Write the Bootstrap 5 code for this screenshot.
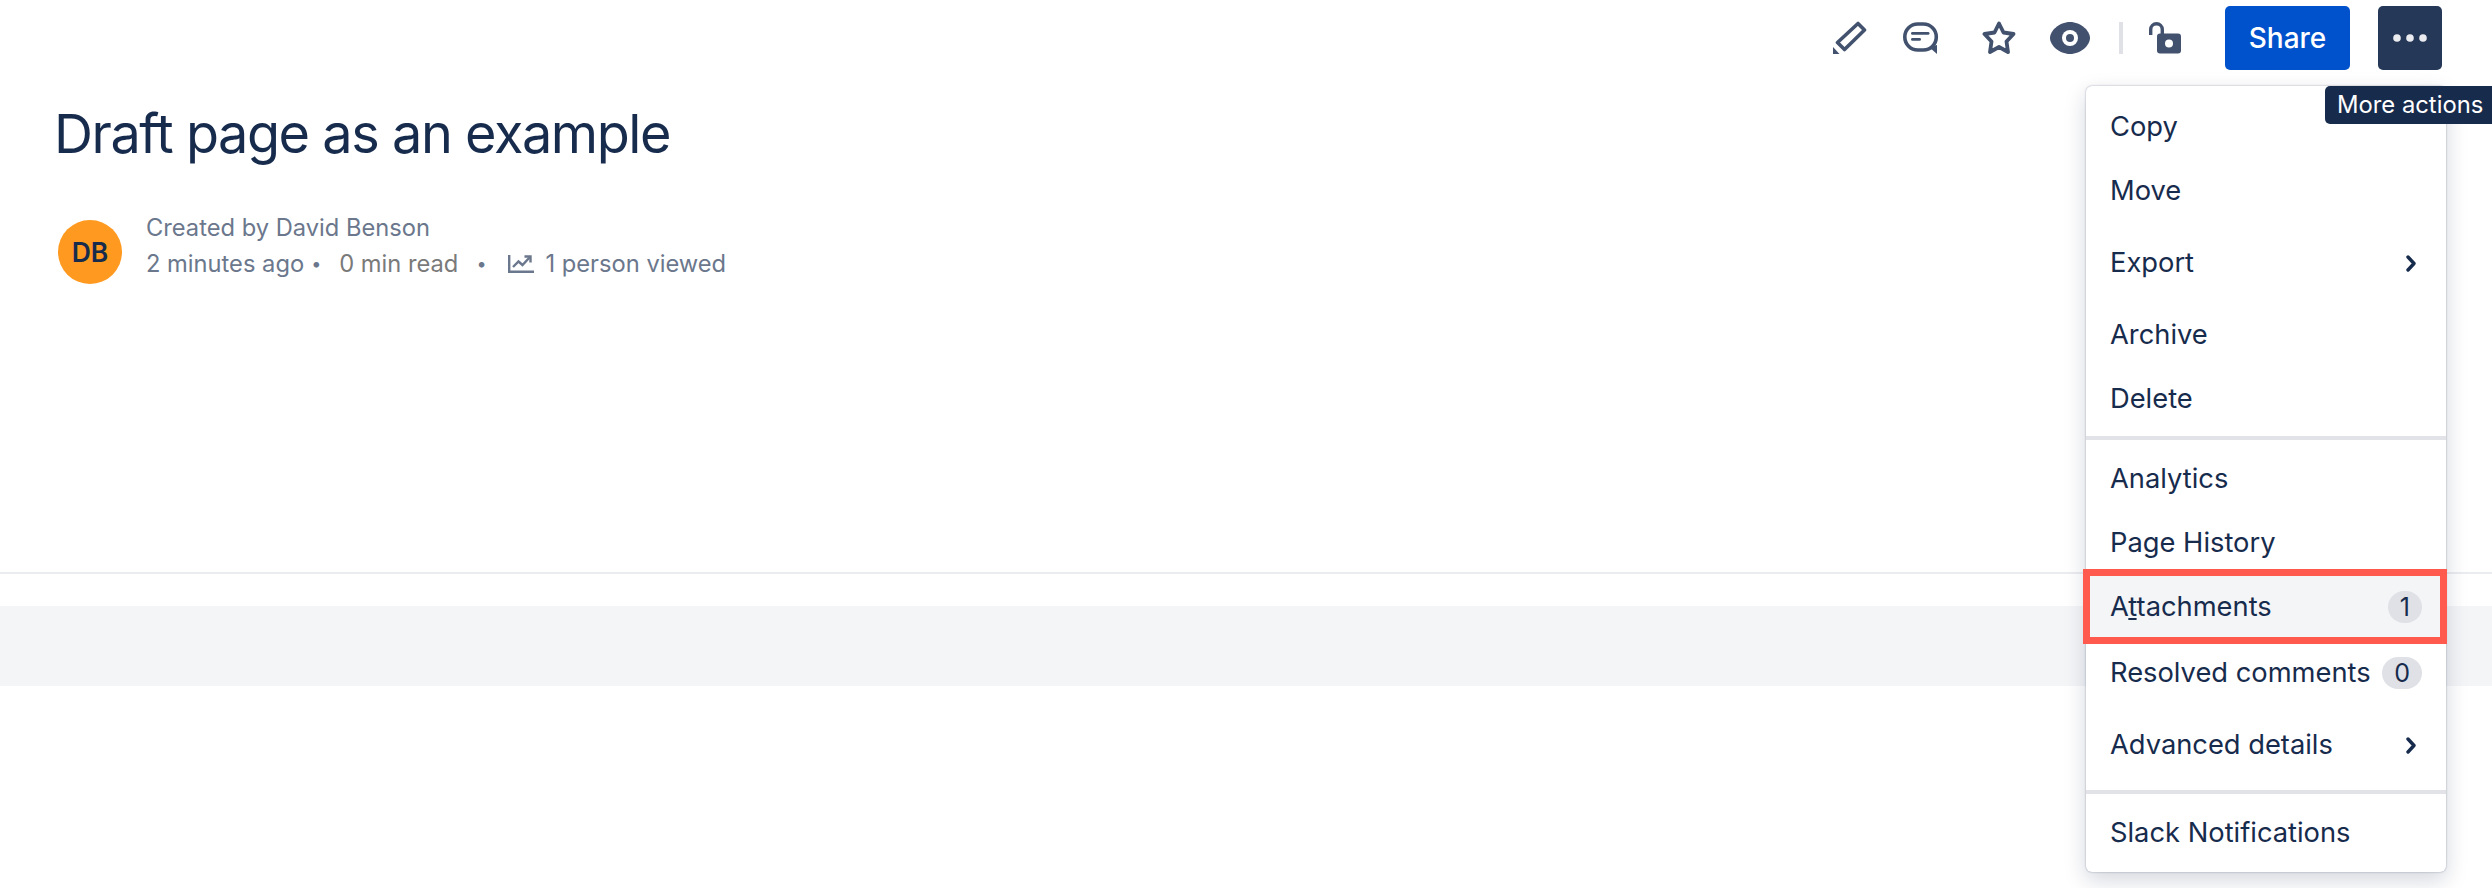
<!DOCTYPE html>
<html lang="en">

<head>
    <meta charset="UTF-8">
    <title>Draft page as an example</title>
    <link href="https://cdn.jsdelivr.net/npm/bootstrap@5.3.3/dist/css/bootstrap.min.css" rel="stylesheet">
    <style>
        body {
            font-family: Inter, "Liberation Sans", sans-serif;
            color: #172b4d;
            background-color: #fff;
            overflow: hidden;
        }

        .page-shell {
            position: relative;
            height: 888px;
        }

        .top-bar {
            height: 76px;
            padding: 6px 50px 0 0;
        }

        .bar-tools {
            height: 64px;
        }

        .bar-icon {
            display: block;
            color: #42526e;
        }

        .gap-comment {
            margin-left: 36px;
        }

        .gap-star {
            margin-left: 42px;
        }

        .gap-eye {
            margin-left: 33px;
        }

        .gap-rule {
            margin-left: 29px;
        }

        .gap-lock {
            margin-left: 26px;
        }

        .bar-rule {
            width: 4px;
            height: 32px;
            background-color: #dfe1e6;
        }

        .btn-share {
            width: 125px;
            height: 64px;
            margin-left: 44px;
            background-color: #0052cc;
            border: 0;
            border-radius: 5px;
            color: #fff;
            font-size: 28px;
            font-weight: 500;
        }

        .btn-more {
            width: 64px;
            height: 64px;
            margin-left: 28px;
            padding: 0;
            background-color: #253858;
            border: 0;
            border-radius: 5px;
        }

        .page-head {
            padding-left: 54px;
        }

        .page-title {
            margin: 24px 0 0;
            font-size: 54px;
            font-weight: 400;
            letter-spacing: -1.45px;
            line-height: 68px;
            color: #172b4d;
        }

        .byline {
            margin: 42px 0 0 4px;
            color: #6b778c;
            font-size: 23.7px;
            line-height: 36px;
        }

        .avatar {
            width: 64px;
            height: 64px;
            margin: 10px 24px 0 0;
            background-color: #ff991f;
            color: #172b4d;
            font-size: 26.5px;
            font-weight: 600;
        }

        .read-time {
            margin-left: 18px;
            color: #7a7a7a;
        }

        .meta-dot {
            margin-left: 18px;
            font-size: 18px;
        }

        .meta-dot.first-dot {
            margin-left: 7px;
        }

        .views-icon {
            margin-left: 21px;
        }

        .views-text {
            margin-left: 12px;
        }

        .page-rule {
            height: 2px;
            margin-top: 288px;
            background-color: #ebecf0;
        }

        .gray-band {
            height: 80px;
            margin-top: 32px;
            background-color: #f4f5f7;
        }

        .action-menu {
            position: absolute;
            top: 86px;
            left: 2086px;
            width: 360px;
            height: 786px;
            padding: 8px 0 0;
            margin: 0;
            background-color: #fff;
            border: 0;
            border-radius: 6px;
            box-shadow: 0 8px 22px rgba(9, 30, 66, .18), 0 0 2px rgba(9, 30, 66, .4);
        }

        .action-menu .dropdown-item {
            height: 64px;
            padding: 2px 24px 0;
            color: #172b4d;
            font-size: 27.3px;
        }

        .action-menu .dropdown-item.has-sub {
            height: 80px;
        }

        .action-menu .dropdown-divider {
            height: 4px;
            margin: 6px 0;
            border: 0;
            background-color: #e1e3e9;
            opacity: 1;
        }

        .action-menu .dropdown-item.picked {
            position: relative;
            margin-bottom: 2px;
            background-color: #f4f5f7;
        }

        .action-menu .dropdown-item.picked::after {
            content: "";
            position: absolute;
            top: -5px;
            right: -1px;
            bottom: -6px;
            left: -3px;
            border: 7px solid #ff5a4d;
        }

        .count-pill {
            height: 32px;
            line-height: 32px;
            padding: 0 12px;
            border-radius: 16px;
            background-color: #dfe1e6;
            text-align: center;
            font-size: 25px;
        }

        .sub-arrow {
            margin-right: 6px;
        }

        .more-tip {
            position: absolute;
            z-index: 1001;
            top: 86px;
            left: 2325px;
            width: 167px;
            height: 38px;
            padding-left: 12px;
            background-color: #172b4d;
            border-radius: 5px 0 0 5px;
            color: #fff;
            font-size: 23.8px;
            line-height: 38px;
            white-space: nowrap;
        }
    </style>
</head>

<body>
    <div class="page-shell">
        <div class="top-bar d-flex justify-content-end align-items-start">
            <div class="bar-tools d-flex align-items-center">
                <!-- pencil -->
                <svg class="bar-icon" width="34" height="34" viewBox="0 0 34 34" fill="none">
                    <path d="M4.500 21.500 25 2.500 31.500 9 11.500 28.500Z" stroke="currentColor" stroke-width="3.600" stroke-linejoin="round"/>
                    <path d="M0 26 6.500 33H0Z" fill="currentColor"/>
                </svg>
                <!-- comment -->
                <svg class="bar-icon gap-comment" width="36" height="34" viewBox="0 0 36 34" fill="none">
                    <rect x="1.800" y="3" width="31.500" height="26" rx="13" stroke="currentColor" stroke-width="3.600"/>
                    <path d="M26 26 34 33V24Z" fill="currentColor"/>
                    <rect x="8" y="11" width="18.500" height="2.800" rx="1.400" fill="currentColor"/>
                    <rect x="8" y="17" width="10" height="2.800" rx="1.400" fill="currentColor"/>
                </svg>
                <!-- star -->
                <svg class="bar-icon gap-star" width="36" height="34" viewBox="0 0 36 34" fill="none">
                    <path d="M18 2.500 22.500 11.500 32.500 13 25.500 20.500 27 31 18 26 9 31 10.500 20.500 3.500 13 13.500 11.500Z" stroke="currentColor" stroke-width="3.800" stroke-linejoin="round"/>
                </svg>
                <!-- eye -->
                <svg class="bar-icon gap-eye" width="40" height="32" viewBox="0 0 40 32">
                    <path d="M20 0C31 0 40 9 40 16S31 32 20 32 0 23 0 16 9 0 20 0Z" fill="currentColor"/>
                    <circle cx="20" cy="16" r="8" fill="#fff"/>
                    <circle cx="20" cy="16" r="4" fill="currentColor"/>
                </svg>
                <div class="bar-rule gap-rule"></div>
                <!-- open lock -->
                <svg class="bar-icon gap-lock" width="32" height="32" viewBox="0 0 32 32" fill="none">
                    <path d="M1.700 13V7.500a5.800 5.800 0 0 1 11.600 0V13" stroke="currentColor" stroke-width="3.400"/>
                    <rect x="8" y="11.500" width="24" height="20" rx="3" fill="currentColor"/>
                    <circle cx="20" cy="21.500" r="4" fill="#fff"/>
                </svg>
            </div>
            <button type="button" class="btn btn-share">Share</button>
            <button type="button" class="btn btn-more d-flex align-items-center justify-content-center">
                <svg width="34" height="8" viewBox="0 0 34 8">
                    <circle cx="4" cy="4" r="3.800" fill="#ebecf0"/>
                    <circle cx="17" cy="4" r="3.800" fill="#ebecf0"/>
                    <circle cx="30" cy="4" r="3.800" fill="#ebecf0"/>
                </svg>
            </button>
        </div>

        <div class="page-head">
            <h1 class="page-title">Draft page as an example</h1>
            <div class="byline d-flex align-items-start">
                <div class="avatar rounded-circle d-flex align-items-center justify-content-center">DB</div>
                <div>
                    <div>Created by David Benson</div>
                    <div class="d-flex align-items-center">
                        <span>2 minutes ago</span>
                        <span class="meta-dot first-dot">•</span>
                        <span class="read-time">0 min read</span>
                        <span class="meta-dot">•</span>
                        <svg class="views-icon" width="26" height="18" viewBox="0 0 26 18" fill="none" stroke="#6b778c" stroke-width="2.400">
                            <path d="M1.200 0v16.800H26"/>
                            <path d="M5 12 10.500 6.500l4 3.500 7-7.500"/>
                            <path d="M16.500 1.500h6v6"/>
                        </svg>
                        <span class="views-text">1 person viewed</span>
                    </div>
                </div>
            </div>
        </div>
        <div class="page-rule"></div>
        <div class="gray-band"></div>

        <div class="dropdown-menu show action-menu">
            <a class="dropdown-item d-flex align-items-center" href="#">Copy</a>
            <a class="dropdown-item d-flex align-items-center" href="#">Move</a>
            <a class="dropdown-item has-sub d-flex align-items-center justify-content-between" href="#">Export
                <svg class="sub-arrow" width="10" height="17" viewBox="0 0 10 17" fill="none" stroke="#172b4d" stroke-width="3.400" stroke-linecap="round" stroke-linejoin="round"><path d="M2 2 8 8.500 2 15"/></svg>
            </a>
            <a class="dropdown-item d-flex align-items-center" href="#">Archive</a>
            <a class="dropdown-item d-flex align-items-center" href="#">Delete</a>
            <hr class="dropdown-divider">
            <a class="dropdown-item d-flex align-items-center" href="#">Analytics</a>
            <a class="dropdown-item d-flex align-items-center" href="#">Page History</a>
            <a class="dropdown-item picked d-flex align-items-center justify-content-between" href="#">
                <span>A<u>t</u>tachments</span><span class="count-pill">1</span>
            </a>
            <a class="dropdown-item d-flex align-items-center justify-content-between" href="#">
                <span>Resolved comments</span><span class="count-pill">0</span>
            </a>
            <a class="dropdown-item has-sub d-flex align-items-center justify-content-between" href="#">Advanced details
                <svg class="sub-arrow" width="10" height="17" viewBox="0 0 10 17" fill="none" stroke="#172b4d" stroke-width="3.400" stroke-linecap="round" stroke-linejoin="round"><path d="M2 2 8 8.500 2 15"/></svg>
            </a>
            <hr class="dropdown-divider">
            <a class="dropdown-item d-flex align-items-center" href="#">Slack Notifications</a>
        </div>

        <div class="more-tip">More actions</div>
    </div>

    <script src="https://cdn.jsdelivr.net/npm/bootstrap@5.3.3/dist/js/bootstrap.bundle.min.js"></script>
</body>

</html>
